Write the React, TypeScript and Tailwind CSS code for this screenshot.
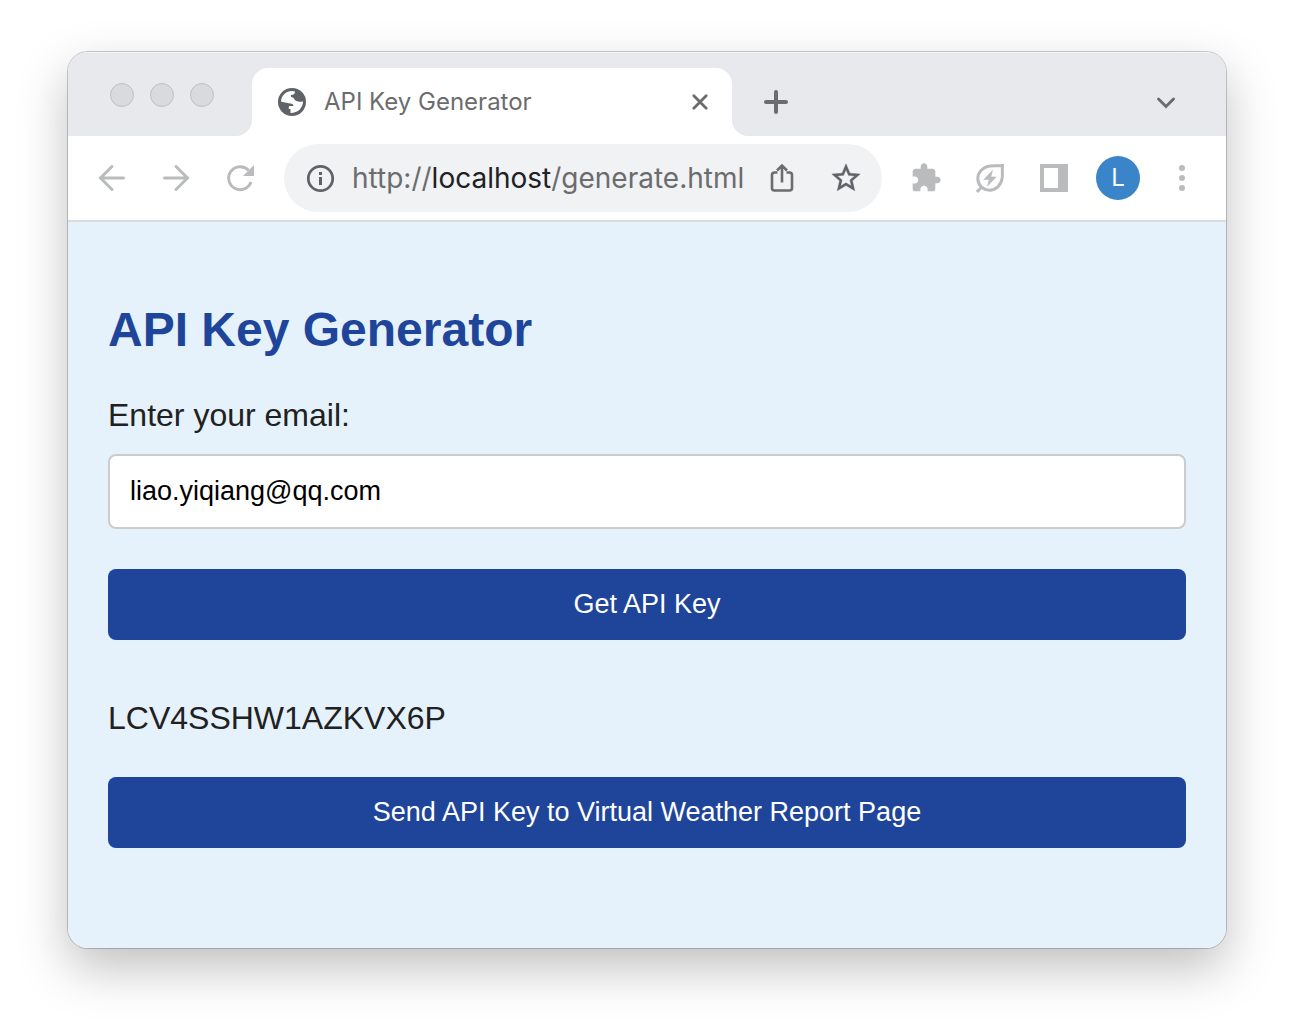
import { useState } from "react";
import type { ReactNode } from "react";

function IconButton({ label, children, className = "" }: { label: string; children: ReactNode; className?: string }) {
  return (
    <button type="button" aria-label={label} className={`flex size-8 shrink-0 items-center justify-center ${className}`}>
      {children}
    </button>
  );
}

function GlobeIcon() {
  return (
    <svg viewBox="0 0 28 28" className="size-7 shrink-0" aria-hidden="true">
      <circle cx="14" cy="14" r="14" fill="#5f6368" />
      <path d="M3 13.500C3.400 7.500 8 3 14 3L17 3.400C17 6 15.500 6.800 13 7C12.500 8.600 13 9.400 14.600 9.600C16.400 10 16.400 12.800 18.400 13C20.500 13.200 21.500 14.500 25 13.200C25 19.200 20.400 25 12.500 25V21H10.800V18.800C11 17.600 13 18.200 15.400 18.200C15.400 16 14.200 15.800 12.400 15.600C10 15.300 7 14.500 3 13.500Z" fill="#fff" />
    </svg>
  );
}

function TabStrip() {
  return (
    <div className="flex h-[84px] items-end bg-[#e8e9ed] shadow-[inset_0_1px_0_#f4f4f6]">
      <div className="flex w-[184px] shrink-0 self-stretch">
        <div className="mt-[31px] ml-[42px] flex gap-4">
          <button type="button" aria-label="Close window" className="size-6 rounded-full border border-[#bfc0c2] bg-[#d9dadc]" />
          <button type="button" aria-label="Minimize window" className="size-6 rounded-full border border-[#bfc0c2] bg-[#d9dadc]" />
          <button type="button" aria-label="Zoom window" className="size-6 rounded-full border border-[#bfc0c2] bg-[#d9dadc]" />
        </div>
      </div>
      <div className="relative flex h-[68px] min-w-0 flex-[0_1_480px] items-center rounded-t-2xl bg-white pr-4 pl-[26px]">
        <svg viewBox="0 0 16 16" className="absolute bottom-0 -left-4 size-4" aria-hidden="true">
          <path d="M16 0V16H0A16 16 0 0 0 16 0Z" fill="#fff" />
        </svg>
        <svg viewBox="0 0 16 16" className="absolute -right-4 bottom-0 size-4" aria-hidden="true">
          <path d="M0 0V16H16A16 16 0 0 1 0 0Z" fill="#fff" />
        </svg>
        <GlobeIcon />
        <span className="ml-[18px] flex-1 truncate text-[24px] text-[#6b6c6e]">API Key Generator</span>
        <IconButton label="Close tab">
          <svg viewBox="0 0 32 32" className="size-8" stroke="#6b6c6e" strokeWidth="2.800" strokeLinecap="round">
            <path d="M9.800 9.800L22.200 22.200M22.200 9.800L9.800 22.200" />
          </svg>
        </IconButton>
      </div>
      <div className="flex h-[68px] flex-1 items-center justify-between pr-11 pl-7">
        <IconButton label="New tab">
          <svg viewBox="0 0 32 32" className="size-8" stroke="#6b6c6e" strokeWidth="4" strokeLinecap="round">
            <path d="M16 6V26M6 16H26" />
          </svg>
        </IconButton>
        <IconButton label="Search tabs">
          <svg viewBox="0 0 32 32" className="size-8" fill="none" stroke="#6b6c6e" strokeWidth="3" strokeLinecap="round">
            <path d="M8.500 13L16 20.500L23.500 13" />
          </svg>
        </IconButton>
      </div>
    </div>
  );
}

function Toolbar() {
  return (
    <div className="flex h-[86px] items-center border-b-2 border-[#dadbdc] bg-white px-7">
      <div className="flex gap-8">
        <IconButton label="Back">
          <svg viewBox="0 0 32 32" className="size-8" fill="none" stroke="#babbbd" strokeWidth="3" strokeLinecap="round">
            <path d="M27.500 16H5M16 4.500L4.500 16L16 27.500" />
          </svg>
        </IconButton>
        <IconButton label="Forward">
          <svg viewBox="0 0 32 32" className="size-8" fill="none" stroke="#babbbd" strokeWidth="3" strokeLinecap="round">
            <path d="M4.500 16H27M16 4.500L27.500 16L16 27.500" />
          </svg>
        </IconButton>
        <IconButton label="Reload">
          <svg viewBox="0 0 32 32" className="size-8">
            <path d="M27 20A11.500 11.500 0 1 1 24.500 8.200" fill="none" stroke="#babbbd" strokeWidth="3" />
            <path d="M30 3V14H19Z" fill="#babbbd" />
          </svg>
        </IconButton>
      </div>
      <div className="ml-7 flex h-[68px] min-w-0 flex-1 items-center rounded-full bg-[#f1f2f4] px-5">
        <IconButton label="View site information">
          <svg viewBox="0 0 32 32" className="size-8">
            <circle cx="16.500" cy="16.500" r="12.200" fill="none" stroke="#5f6368" strokeWidth="2.800" />
            <path d="M15 15H18V23H15ZM15 10H18V13H15Z" fill="#5f6368" />
          </svg>
        </IconButton>
        <div className="ml-4 min-w-0 flex-1 truncate text-[28px] text-[#6b6c6e]">
          http://<span className="text-[#202124]">localhost</span>/generate.html
        </div>
        <IconButton label="Share this page">
          <svg viewBox="0 0 32 32" className="size-8" fill="none" stroke="#6b6c6e" strokeWidth="2.600">
            <path d="M11.500 10.500H8.500Q6 10.500 6 13V26Q6 28.500 8.500 28.500H23.500Q26 28.500 26 26V13Q26 10.500 23.500 10.500H20.500" />
            <path d="M16 20.500V4M11 8.500L16 3.500L21 8.500" />
          </svg>
        </IconButton>
        <IconButton label="Bookmark this tab" className="ml-8">
          <svg viewBox="0 0 24 24" className="size-[34px] shrink-0" fill="#5f6368" stroke="#5f6368" strokeWidth="0.300">
            <path d="M22 9.240l-7.190-.62L12 2 9.190 8.630 2 9.240l5.460 4.730L5.820 21 12 17.270 18.180 21l-1.630-7.030L22 9.240zM12 15.400l-3.760 2.270 1-4.280-3.320-2.880 4.380-.38L12 6.100l1.710 4.040 4.380.38-3.320 2.880 1 4.280L12 15.400z" />
          </svg>
        </IconButton>
      </div>
      <div className="ml-7 flex shrink-0 items-center">
        <IconButton label="Extensions">
          <svg viewBox="0 0 24 24" className="size-8" fill="#babbbd">
            <path d="M20.500 11H19V7c0-1.100-.9-2-2-2h-4V3.500C13 2.120 11.880 1 10.500 1S8 2.120 8 3.500V5H4c-1.100 0-1.990.9-1.990 2v3.800H3.500c1.490 0 2.700 1.210 2.700 2.700s-1.210 2.700-2.700 2.700H2V20c0 1.100.9 2 2 2h3.800v-1.500c0-1.490 1.210-2.700 2.700-2.700 1.490 0 2.700 1.210 2.700 2.700V22H17c1.100 0 2-.9 2-2v-4h1.500c1.380 0 2.500-1.120 2.500-2.500S21.880 11 20.500 11z" />
          </svg>
        </IconButton>
        <IconButton label="Energy saver" className="ml-8">
          <svg viewBox="0 0 32 32" className="size-8" fill="none" stroke="#babbbd" strokeWidth="3">
            <path d="M28.500 3.500C25 4 21 3.300 16 4C9 5 3.800 10 3.800 16.500C3.800 23 9 28.200 15.500 28.200C22 28.200 27 23.500 28.200 16C28.800 11 28 7 28.500 3.500Z" />
            <path d="M2.800 30L8 24.800" />
            <path d="M18.500 8.500L9.800 17.600H15.200L13.500 24L22.200 15H16.800Z" fill="#babbbd" strokeWidth="0.600" />
          </svg>
        </IconButton>
        <IconButton label="Side panel" className="ml-8">
          <svg viewBox="0 0 32 32" className="size-8" fill="#babbbd">
            <path fillRule="evenodd" d="M2 2H30V30H2ZM6 6V26H20V6Z" />
          </svg>
        </IconButton>
        <button type="button" aria-label="Profile" className="ml-[26px] flex size-11 items-center justify-center rounded-full bg-[#3a84ca] text-[24px] text-white">
          L
        </button>
        <IconButton label="Menu" className="ml-[26px]">
          <svg viewBox="0 0 32 32" className="size-8" fill="#babbbd">
            <circle cx="16" cy="6" r="3" />
            <circle cx="16" cy="16" r="3" />
            <circle cx="16" cy="26" r="3" />
          </svg>
        </IconButton>
      </div>
    </div>
  );
}

function GeneratorPage() {
  const [email, setEmail] = useState("liao.yiqiang@qq.com");
  return (
    <main className="bg-[#e5f2fc] px-10 pt-20 pb-[100px] font-['Liberation_Sans',Arial,sans-serif] text-[32px] leading-[37px] text-[#212121]">
      <h1 className="text-[48px] leading-[55px] font-bold text-[#1f459b]">API Key Generator</h1>
      <form onSubmit={(event) => event.preventDefault()}>
        <label htmlFor="email" className="mt-10 block">
          Enter your email:
        </label>
        <input
          id="email"
          type="email"
          value={email}
          onChange={(event) => setEmail(event.target.value)}
          className="mt-5 block h-[75px] w-full rounded-lg border-2 border-[#cccccc] bg-white px-5 text-[27px] text-black outline-none"
        />
        <button type="submit" className="mt-10 block h-[71px] w-full rounded-lg bg-[#1f459b] text-[27px] text-white">
          Get API Key
        </button>
      </form>
      <p className="mt-[60px]">LCV4SSHW1AZKVX6P</p>
      <button type="button" className="mt-10 block h-[71px] w-full rounded-lg bg-[#1f459b] text-[27px] text-white">
        Send API Key to Virtual Weather Report Page
      </button>
    </main>
  );
}

export default function App() {
  return (
    <div className="min-h-screen bg-white px-[68px] pt-[52px] pb-[84px] font-[Inter,sans-serif]">
      <div className="overflow-hidden rounded-[20px] shadow-[0_0_0_1px_rgba(0,0,0,0.2),0_20px_50px_rgba(0,0,0,0.25)]">
        <TabStrip />
        <Toolbar />
        <GeneratorPage />
      </div>
    </div>
  );
}
